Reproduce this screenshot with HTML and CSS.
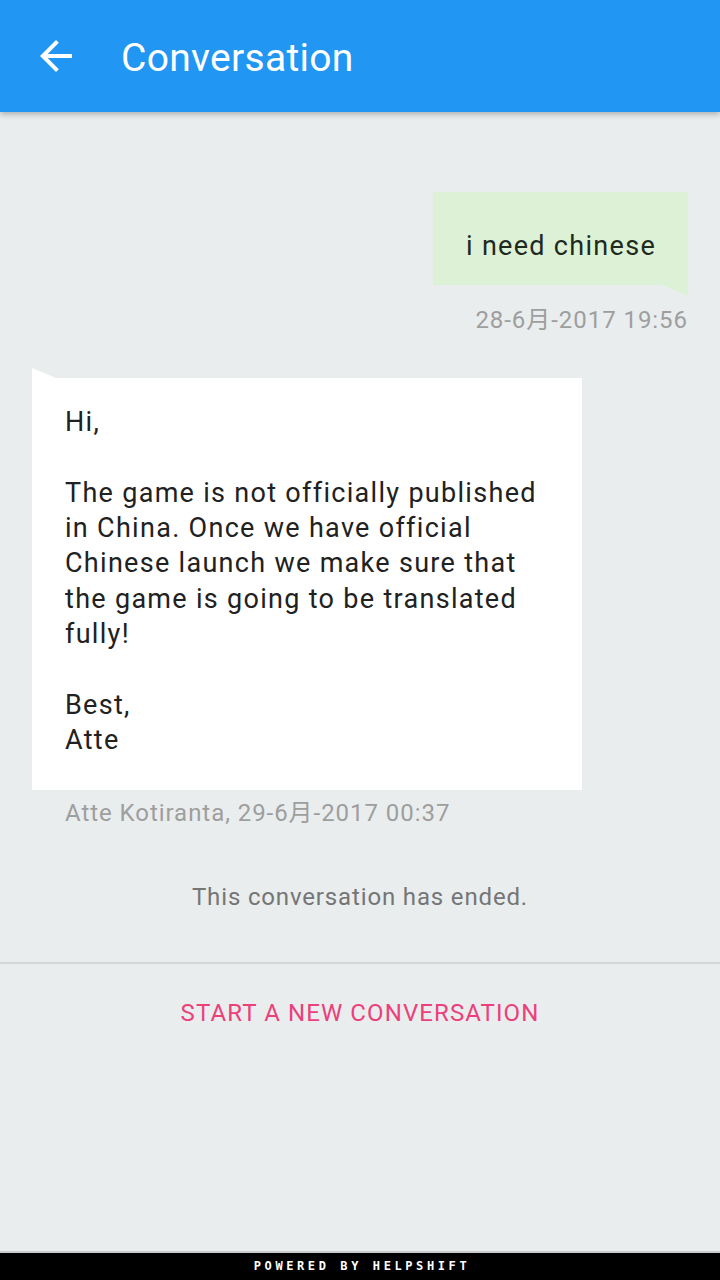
FILE: index.html
```html
<!DOCTYPE html>
<html lang="en">
<head>
<meta charset="utf-8">
<title>Conversation</title>
<link rel="stylesheet" href="styles.css">
</head>
<body>
<div class="app">
  <header class="toolbar">
    <svg class="back" viewBox="0 0 24 24" width="48" height="48" aria-hidden="true">
      <path d="M20 11H7.83l5.59-5.59L12 4l-8 8 8 8 1.41-1.41L7.83 13H20v-2z" fill="#fff"/>
    </svg>
    <h1 class="title">Conversation</h1>
  </header>

  <main class="thread">
    <div class="msg msg-user">
      <div class="bubble bubble-user">i need chinese</div>
      <div class="stamp stamp-user">28-6月-2017 19:56</div>
    </div>

    <div class="msg msg-admin">
      <div class="bubble bubble-admin">
        <p>Hi,</p>
        <p>The game is not officially published in China. Once we have official Chinese launch we make sure that the game is going to be translated fully!</p>
        <p>Best,<br>Atte</p>
      </div>
      <div class="stamp stamp-admin">Atte Kotiranta, 29-6月-2017 00:37</div>
    </div>

    <div class="ended">This conversation has ended.</div>
    <hr class="divider">
    <div class="new-conv">START A NEW CONVERSATION</div>
  </main>

  <footer class="powered">POWERED BY HELPSHIFT</footer>
</div>
</body>
</html>
```

FILE: styles.css
```css
* {
  box-sizing: border-box;
}

html, body {
  margin: 0;
  padding: 0;
}

body {
  font-family: Roboto, "Noto Sans CJK SC", "Noto Sans", sans-serif;
  background: #e9edee;
  color: #212121;
}

.app {
  width: 720px;
  height: 1280px;
  display: flex;
  flex-direction: column;
  overflow: hidden;
}

/* top app bar */
.toolbar {
  height: 112px;
  flex: none;
  background: #2196f3;
  display: flex;
  align-items: center;
  padding: 4px 0 0 32px;
  box-shadow: 0 2px 6px rgba(0, 0, 0, 0.28);
  position: relative;
  z-index: 1;
}

.back {
  flex: none;
  display: block;
  margin-top: -4px;
}

.title {
  margin: 0 0 0 41px;
  font-size: 39px;
  font-weight: 400;
  color: #fff;
  letter-spacing: 0.3px;
}

/* message list */
.thread {
  flex: 1;
  display: flex;
  flex-direction: column;
}

.msg {
  display: flex;
  flex-direction: column;
}

.msg-user {
  align-items: flex-end;
  margin: 80px 32px 0 0;
}

.msg-admin {
  align-items: flex-start;
  margin: 44px 0 0 32px;
}

.bubble {
  position: relative;
  font-size: 27px;
  line-height: 35.3px;
  letter-spacing: 1.3px;
}

.bubble-user {
  background: #dcf1d6;
  padding: 37px 32px 21px 33px;
  color: #1f2a1f;
}

/* tail under the right edge of the sent bubble */
.bubble-user::after {
  content: "";
  position: absolute;
  right: 0;
  top: 100%;
  border-style: solid;
  border-width: 0 0 11px 26px;
  border-color: transparent transparent transparent #dcf1d6;
  transform: scaleX(-1);
}

.bubble-admin {
  background: #fff;
  width: 550px;
  padding: 27px 20px 32px 33px;
}

/* tail above the left edge of the received bubble */
.bubble-admin::before {
  content: "";
  position: absolute;
  left: 0;
  bottom: 100%;
  border-style: solid;
  border-width: 10px 0 0 24px;
  border-color: transparent transparent transparent #fff;
}

.bubble-admin p {
  margin: 0 0 35.3px;
}

.bubble-admin p:last-child {
  margin-bottom: 0;
}

.stamp {
  font-size: 24px;
  line-height: 28px;
  color: #9e9e9e;
  letter-spacing: 0.95px;
}

.stamp-user {
  margin-top: 21px;
}

.stamp-admin {
  margin: 9px 0 0 33px;
}

.ended {
  margin-top: 56px;
  text-align: center;
  font-size: 24px;
  line-height: 28px;
  color: #757575;
  letter-spacing: 0.85px;
}

.divider {
  margin: 51px 0 0;
  border: 0;
  border-top: 2px solid #d3d6d7;
  height: 0;
}

.new-conv {
  margin-top: 35px;
  text-align: center;
  font-size: 24px;
  line-height: 28px;
  color: #ec407a;
  letter-spacing: 1.1px;
}

/* branding strip */
.powered {
  flex: none;
  height: 29px;
  background: #000;
  border-top: 2px solid #c9cccd;
  color: #fff;
  font-family: "DejaVu Sans Mono", monospace;
  font-weight: 700;
  font-size: 12px;
  letter-spacing: 3.6px;
  text-align: center;
  line-height: 27px;
  padding-left: 4px;
}
```
